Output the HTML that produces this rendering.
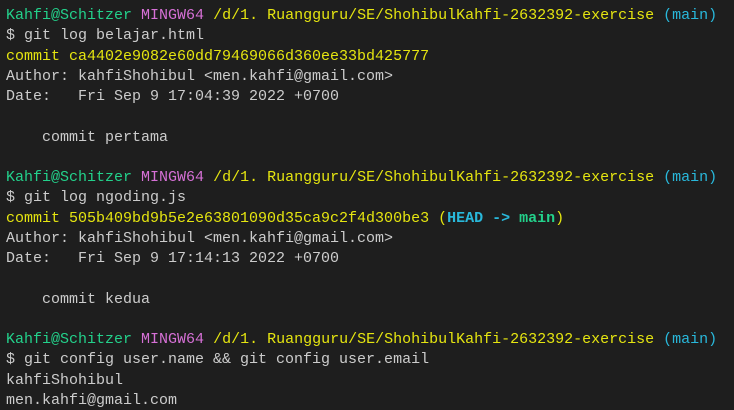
<!DOCTYPE html>
<html><head><style>
html,body{margin:0;padding:0;background:#1e1e1e;width:734px;height:410px;overflow:hidden}
pre{margin:0;padding:6px 0 0 6px;font-family:"Liberation Mono",monospace;font-size:15px;line-height:20.25px;color:#cccccc;white-space:pre}
.g{color:#23d18b}.m{color:#d670d6}.y{color:#e5e510}.c{color:#29b8db}
.b{font-weight:bold}
</style></head><body><pre><span class="g">Kahfi@Schitzer</span> <span class="m">MINGW64</span> <span class="y">/d/1. Ruangguru/SE/ShohibulKahfi-2632392-exercise</span> <span class="c">(main)</span>
$ git log belajar.html
<span class="y">commit ca4402e9082e60dd79469066d360ee33bd425777</span>
Author: kahfiShohibul &lt;men.kahfi@gmail.com&gt;
Date:   Fri Sep 9 17:04:39 2022 +0700

    commit pertama

<span class="g">Kahfi@Schitzer</span> <span class="m">MINGW64</span> <span class="y">/d/1. Ruangguru/SE/ShohibulKahfi-2632392-exercise</span> <span class="c">(main)</span>
$ git log ngoding.js
<span class="y">commit 505b409bd9b5e2e63801090d35ca9c2f4d300be3 (</span><span class="c b">HEAD -&gt; </span><span class="g b">main</span><span class="y">)</span>
Author: kahfiShohibul &lt;men.kahfi@gmail.com&gt;
Date:   Fri Sep 9 17:14:13 2022 +0700

    commit kedua

<span class="g">Kahfi@Schitzer</span> <span class="m">MINGW64</span> <span class="y">/d/1. Ruangguru/SE/ShohibulKahfi-2632392-exercise</span> <span class="c">(main)</span>
$ git config user.name &amp;&amp; git config user.email
kahfiShohibul
men.kahfi@gmail.com</pre></body></html>
